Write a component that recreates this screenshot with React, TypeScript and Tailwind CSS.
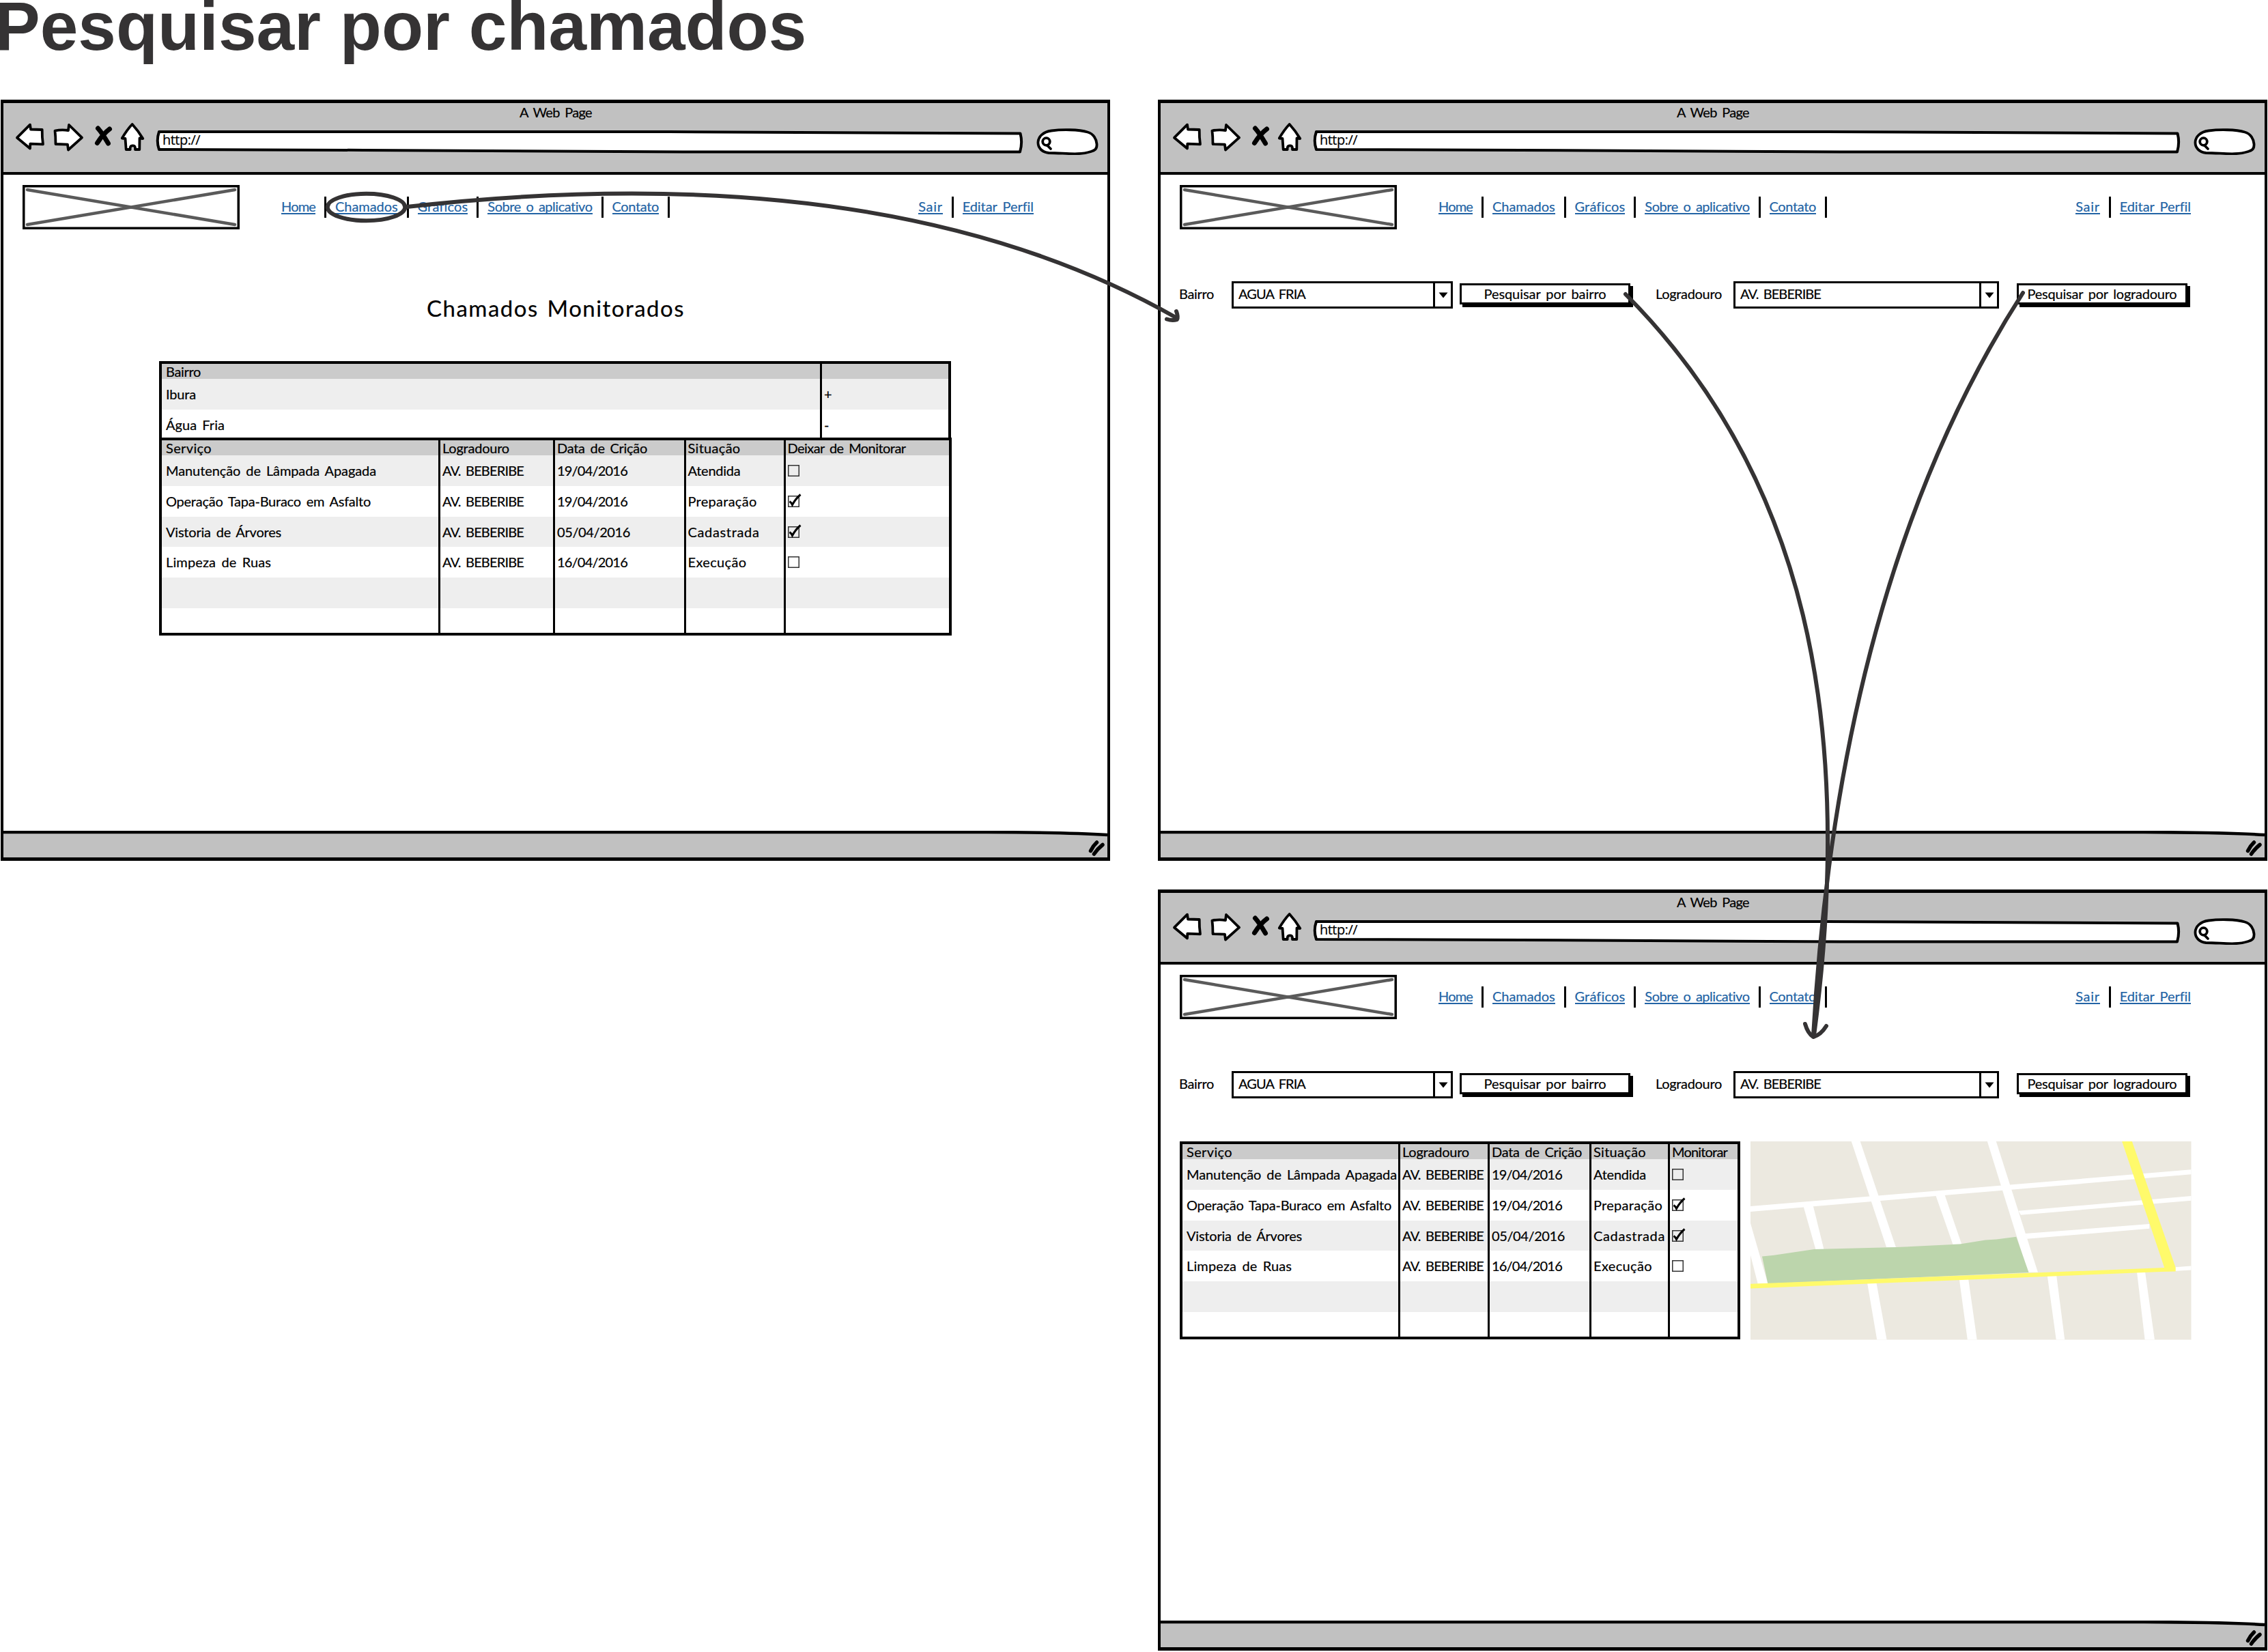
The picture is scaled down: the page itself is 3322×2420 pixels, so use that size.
import { useLayoutEffect, useRef } from "react";
import type { ReactNode } from "react";

/** Text set to an exact width by spreading its letters. */
function Fit({ w, children, className = "" }: { w: number; children: string; className?: string }) {
  const ref = useRef<HTMLSpanElement>(null);
  useLayoutEffect(() => {
    const el = ref.current;
    if (!el) return;
    el.style.letterSpacing = "0px";
    const natural = el.getBoundingClientRect().width;
    el.style.letterSpacing = `${(w - natural) / children.length}px`;
  }, [w, children]);
  return (
    <span ref={ref} className={`inline-block whitespace-pre ${className}`}>
      {children}
    </span>
  );
}

function Toolbar() {
  return (
    <div className="h-[105px] shrink-0 border-b-[4px] border-black bg-[#c1c1c1] pt-[3px]">
      <div className="flex h-5 justify-center pl-px">
        <Fit w={106}>A Web Page</Fit>
      </div>
      <div className="mt-[5px] flex pl-[11px]">
        <svg width="200" height="48" viewBox="16 179 200 48" fill="white" stroke="black" strokeWidth="3.8" strokeLinejoin="round" strokeLinecap="round">
          <path d="M25 201.7 L44 182.7 L45 189.5 L61.7 190 Q61.5 201 63 211.3 L44.3 210.7 L44 217.5 Z" />
          <path d="M80.5 191.5 Q90 189.5 100 191 L101 183 L120 201.7 L100 219.5 L99 211.7 L81.5 211 Q81.5 200 80.5 191.5 Z" />
          <path d="M193.7 182 Q202 191 209.3 203 L204.5 202.5 L204.3 219 L198 219 Q198.5 213 194.5 213.3 Q190 213 190.7 219 L184.7 219 L183.5 203 L178.8 202.5 Q186 190 193.7 182 Z" />
          <path d="M143.5 188 Q149 194 158.5 210" strokeWidth="7" />
          <path d="M160.5 189 Q151 196 142.5 209.5" strokeWidth="7" />
        </svg>
        <div className="relative ml-[11px] h-12 w-[1272px]">
          <svg className="absolute inset-0" width="1272" height="48" viewBox="227 179 1272 48" fill="white" stroke="black" strokeWidth="4" strokeLinejoin="round">
            <path d="M233 193 L980 193 C1200 194 1380 195.5 1494.5 195.5 Q1498 209 1494 222.5 L1000 222.5 C700 221.5 500 219 233 219 Q228.5 206 233 193 Z" />
          </svg>
          <Fit w={55} className="absolute left-[11px] top-4 !font-['Open_Sans',sans-serif]">http://</Fit>
        </div>
        <svg className="ml-[15px]" width="100" height="48" viewBox="1514 179 100 48" fill="white" stroke="black" strokeWidth="3.8" strokeLinecap="round">
          <path d="M1536 224 C1526 223 1520 216 1520.5 208 C1521 200 1528 193 1540 191.5 C1555 189.5 1580 189.500 1593 193.5 C1602 196 1606 204 1606.5 211 C1607 219 1603 220.5 1598 222 C1580 228 1560 224 1536 224 Z" />
          <circle cx="1532.5" cy="207.5" r="5.3" />
          <path d="M1534 213 L1539 218" />
        </svg>
      </div>
    </div>
  );
}

function StatusBar() {
  return (
    <div className="relative h-[39px] shrink-0 bg-[#c1c1c1]">
      <svg className="absolute inset-0" width="1617" height="39" viewBox="0 0 1617 39" fill="none" stroke="black">
        <path d="M0 0 H1617 V6 Q1560 2.5 1440 2 H0 Z" fill="white" stroke="none" />
        <path d="M0 2 H1440 Q1560 2.5 1617 6" strokeWidth="4.5" />
        <path d="M1601.5 17 Q1596 22 1592.5 29.5 M1610 20.5 Q1603 26 1597.5 34" strokeWidth="5.5" strokeLinecap="round" />
      </svg>
    </div>
  );
}

function Divider() {
  return <div className="h-[31px] w-[3px] bg-black" />;
}

function Link({ w, children }: { w: number; children: string }) {
  return (
    <a className="mb-[2px] h-[22px] border-b-2 border-[#2364a5] text-[#2364a5]">
      <Fit w={w}>{children}</Fit>
    </a>
  );
}

function SiteHeader() {
  return (
    <div className="mt-[15px] flex h-[65px] items-center pl-[28px] pr-[108px]">
      <svg width="318" height="65" viewBox="0 0 318 65" fill="none">
        <rect x="1.75" y="1.75" width="314.5" height="61.5" stroke="black" strokeWidth="3.5" />
        <path d="M7 7 L311 58 M311 7 L7 58" stroke="#5a5a5a" strokeWidth="4.5" strokeLinecap="round" />
      </svg>
      <nav className="ml-[61px] flex items-center gap-[13px]">
        <Link w={50}>Home</Link>
        <Divider />
        <Link w={91.5}>Chamados</Link>
        <Divider />
        <Link w={73.5}>Gráficos</Link>
        <Divider />
        <Link w={153.5}>Sobre o aplicativo</Link>
        <Divider />
        <Link w={68.5}>Contato</Link>
        <Divider />
      </nav>
      <nav className="ml-auto flex items-center gap-[13px]">
        <Link w={35.5}>Sair</Link>
        <Divider />
        <Link w={104}>Editar Perfil</Link>
      </nav>
    </div>
  );
}

function BrowserWindow({ children, className = "" }: { children: ReactNode; className?: string }) {
  return (
    <section className={`flex h-[1115px] w-[1625px] flex-col border-x-[4px] border-y-[5px] border-black bg-white ${className}`}>
      <Toolbar />
      <div className="flex flex-1 flex-col">
        <SiteHeader />
        {children}
      </div>
      <StatusBar />
    </section>
  );
}

function Select({ textWidth, children, className }: { textWidth: number; children: string; className: string }) {
  return (
    <div className={`flex h-10 border-[3.5px] border-black bg-white ${className}`}>
      <div className="flex-1 pl-[7px] pt-[5px]">
        <Fit w={textWidth}>{children}</Fit>
      </div>
      <div className="flex w-[26px] items-center justify-center border-l-[3px] border-black">
        <svg width="14" height="9" viewBox="0 0 14 9">
          <path d="M0.5 0.5 H13.5 L7 8.5 Z" />
        </svg>
      </div>
    </div>
  );
}

function Button({ textWidth, children }: { textWidth: number; children: string }) {
  return (
    <button className="mt-[3px] flex h-[31px] w-[250px] justify-center border-[3.5px] border-black bg-white pt-[2px] shadow-[4px_4px_0_#000] [word-spacing:3px]">
      <Fit w={textWidth}>{children}</Fit>
    </button>
  );
}

function SearchForm() {
  return (
    <div className="mt-[76px] flex h-10 items-start pl-[27px]">
      <Fit w={51} className="mt-2">Bairro</Fit>
      <Select textWidth={98} className="ml-[26px] w-[324px]">AGUA FRIA</Select>
      <div className="ml-[10px]">
        <Button textWidth={179}>Pesquisar por bairro</Button>
      </div>
      <Fit w={97} className="ml-[37px] mt-2">Logradouro</Fit>
      <Select textWidth={118} className="ml-[17px] w-[389px]">AV. BEBERIBE</Select>
      <div className="ml-[26px]">
        <Button textWidth={219}>Pesquisar por logradouro</Button>
      </div>
    </div>
  );
}

function CheckBox({ checked }: { checked: boolean }) {
  return (
    <svg width="22" height="22" viewBox="0 0 22 22" fill="none" stroke="black">
      <rect x="0.75" y="3.75" width="15.5" height="15.5" stroke="#333" strokeWidth="1.5" />
      {checked && <path d="M2.5 11.5 Q5 13 6.5 16.5 Q11 8 18.5 1.5" strokeWidth="3" />}
    </svg>
  );
}

type Cell = [string, number] | boolean | null;

function Row({ cells, cols, tone }: { cells: Cell[]; cols: string; tone: string }) {
  return (
    <div className={`grid shrink-0 ${cols} ${tone}`}>
      {cells.map((cell, i) => (
        <div key={i} className="flex items-center border-r-[3px] border-black pb-px pl-[3px] first:pl-[6px] last:border-r-0">
          {typeof cell === "boolean" ? <CheckBox checked={cell} /> : cell ? <Fit w={cell[1]}>{cell[0]}</Fit> : null}
        </div>
      ))}
    </div>
  );
}

const AV: Cell = ["AV. BEBERIBE", 119];
const CALLS: Cell[][] = [
  [["Manutenção de Lâmpada Apagada", 308], AV, ["19/04/2016", 103], ["Atendida", 77], false],
  [["Operação Tapa-Buraco em Asfalto", 300], AV, ["19/04/2016", 103], ["Preparação", 101], true],
  [["Vistoria de Árvores", 169], AV, ["05/04/2016", 107], ["Cadastrada", 105], true],
  [["Limpeza de Ruas", 154], AV, ["16/04/2016", 103], ["Execução", 86], false],
  [null, null, null, null, null],
  [null, null, null, null, null],
];

function CallsTable({ cols, last, className }: { cols: string; last: Cell; className: string }) {
  const head: Cell[] = [["Serviço", 67], ["Logradouro", 98], ["Data de Crição", 132], ["Situação", 77], last];
  return (
    <div className={`flex flex-col overflow-hidden border-[4px] border-black ${className}`}>
      <Row cells={head} cols={cols} tone="h-[22.3px] bg-[#cbcbcb] leading-[18px]" />
      {CALLS.map((cells, i) => (
        <Row key={i} cells={cells} cols={cols} tone={i % 2 ? "h-[44.7px] bg-white" : "h-[44.7px] bg-[#eeeeee]"} />
      ))}
    </div>
  );
}

function MonitoredPage() {
  const cols = "grid-cols-[967px_1fr]";
  return (
    <>
      <h2 className="mt-[99px] flex h-8 justify-center pl-px text-[33px] leading-8">
        <Fit w={378}>Chamados Monitorados</Fit>
      </h2>
      <div className="ml-[228px] mt-[62px] flex h-[112px] w-[1160px] flex-col overflow-hidden border-x-[4px] border-t-[4px] border-black">
        <Row cells={[["Bairro", 51], null]} cols={cols} tone="h-[22.3px] bg-[#cbcbcb] leading-[18px]" />
        <Row cells={[["Ibura", 44], ["+", 11]]} cols={cols} tone="h-[44.7px] bg-[#eeeeee]" />
        <Row cells={[["Água Fria", 86], ["-", 6]]} cols={cols} tone="h-[44.7px] bg-white" />
      </div>
      <CallsTable className="ml-[228px] h-[290px] w-[1161px]" cols="grid-cols-[408px_168px_191.5px_146px_1fr]" last={["Deixar de Monitorar", 173]} />
    </>
  );
}

function StreetMap() {
  return (
    <svg className="ml-[15px]" width="645.5" height="290.5" viewBox="53 70 1446 871" preserveAspectRatio="none">
      <rect x="53" y="70" width="1446" height="871" fill="#ece9e0" />
      <g fill="white">
        <path d="M53 355 L1499 194 V215 L53 379 Z" />
        <path d="M384 70 H413 L530 535 H499 Z" />
        <path d="M830 70 H859 L996 645 H963 Z" />
        <path d="M226 352 L258 350 L294 545 H267 Z" />
        <path d="M661 308 L690 304 L746 522 H717 Z" />
        <path d="M932 375 L1499 310 V330 L940 393 Z" />
        <path d="M955 475 L1362 433 V453 L960 498 Z" />
        <path d="M53 430 L110 695 H77 L53 570 Z" />
        <path d="M436 690 H466 L500 941 H468 Z" />
        <path d="M738 675 H768 L796 941 H765 Z" />
        <path d="M1027 660 H1057 L1084 941 H1056 Z" />
        <path d="M1321 645 H1348 L1379 941 H1347 Z" />
        <path d="M1440 623 L1499 617 V635 L1440 640 Z" />
      </g>
      <path d="M91 575 L130 570 L262 544 L530 535 L740 521 L824 503 L860 500 L925 489 L966 646 L110 695 Z" fill="#bcd5ac" />
      <path d="M53 696 L1411 625 L1272 70 H1305 L1448 625 V641 L1400 643 L53 716 Z" fill="#fffa6b" />
    </svg>
  );
}

/** Arrows and the ring that link one screen to the next. */
function FlowArrows() {
  return (
    <svg className="pointer-events-none absolute left-0 top-0" width="3322" height="2420" viewBox="0 0 3322 2420" fill="none" stroke="#353334" strokeWidth="6" strokeLinecap="round" strokeLinejoin="round">
      <ellipse cx="536.5" cy="303.5" rx="56.8" ry="19.8" />
      <path d="M596 303 Q1300 224 1724 466" />
      <path d="M1723 456 Q1726 464 1724 468 Q1717 470 1709 467.5" />
      <path d="M2381 431 C2645 696 2718 1058 2657 1517" />
      <path d="M2963 429 Q2694 847 2656 1517" />
      <path d="M2644 1500 Q2648 1514 2656 1519 Q2667 1516 2675 1503" />
    </svg>
  );
}

export default function App() {
  return (
    <main className="relative h-[2420px] w-[3322px] overflow-hidden bg-white font-['Lato',sans-serif] text-[20px] leading-[20px] text-black [-webkit-text-stroke:0.2px_currentColor] [word-spacing:3px]">
      <h1 className="-ml-[8px] h-[146px] whitespace-nowrap font-['Liberation_Sans',Arial,sans-serif] text-[100px] font-bold leading-[76px] text-[#353334] [-webkit-text-stroke:0] [word-spacing:0]">
        Pesquisar por chamados
      </h1>
      <div className="grid grid-cols-[1625px_1625px] gap-x-[70px] gap-y-[42px] pl-px">
        <BrowserWindow>
          <MonitoredPage />
        </BrowserWindow>
        <BrowserWindow>
          <SearchForm />
        </BrowserWindow>
        <BrowserWindow className="col-start-2">
          <SearchForm />
          <div className="mt-[63px] flex items-start pl-[28px]">
            <CallsTable className="h-[290px] w-[821px]" cols="grid-cols-[319px_131px_149px_115px_1fr]" last={["Monitorar", 81]} />
            <StreetMap />
          </div>
        </BrowserWindow>
      </div>
      <FlowArrows />
    </main>
  );
}
